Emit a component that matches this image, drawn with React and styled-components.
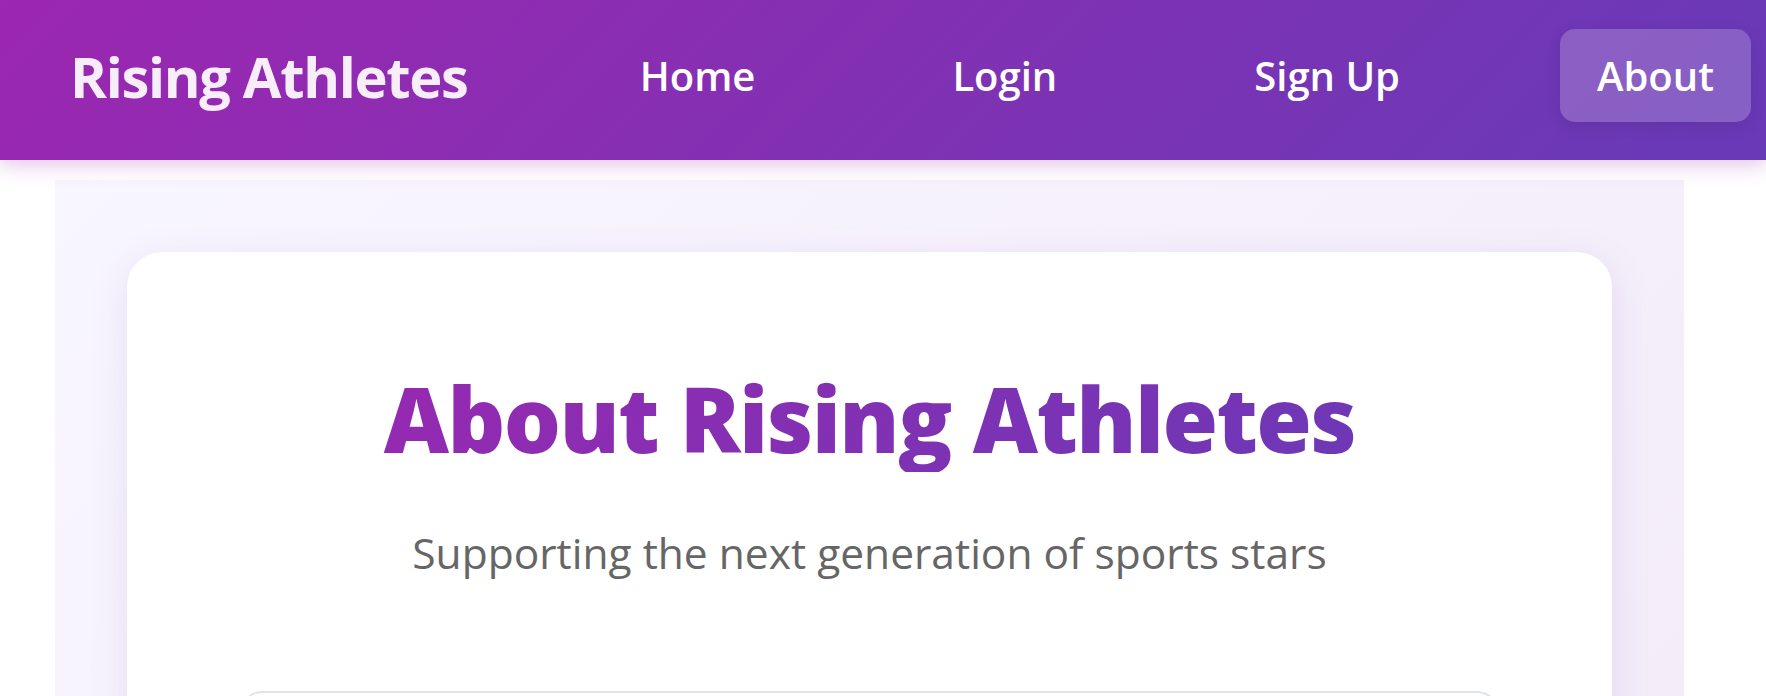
import React from 'react';
import styled, { createGlobalStyle } from 'styled-components';

const GlobalStyle = createGlobalStyle`
    * {
        box-sizing: border-box;
    }
    body {
        margin: 0;
        background: #ffffff;
        font-family: "Open Sans", "Noto Sans", sans-serif;
        overflow-x: hidden;
    }
`;

const Header = styled.header`
    display: flex;
    align-items: center;
    height: 160px;
    padding: 0 15px 9px 70px;
    background: linear-gradient(135deg, #9c27b0 0%, #673ab7 100%);
    box-shadow: 0 4px 20px rgba(156, 39, 176, 0.3);
    position: relative;
    z-index: 2;
`;

const Logo = styled.div`
    font-size: 56px;
    font-weight: 700;
    letter-spacing: -1.3px;
    color: #f8eef9;
    white-space: nowrap;
`;

const Nav = styled.nav`
    display: flex;
    align-items: center;
    gap: 123px;
    margin-left: auto;
`;

const NavLink = styled.a`
    display: flex;
    align-items: center;
    height: 93px;
    padding: 0 37px;
    border-radius: 15px;
    font-size: 40px;
    font-weight: 600;
    color: #ffffff;
    text-decoration: none;
    white-space: nowrap;
    background: ${p => (p.$active ? 'rgba(255, 255, 255, 0.2)' : 'transparent')};
    box-shadow: ${p => (p.$active ? '0 4px 15px rgba(0, 0, 0, 0.1)' : 'none')};
`;

const Page = styled.main`
    width: 1629px;
    margin: 20px 0 0 55px;
    padding: 72px 72px 60px;
    background: linear-gradient(135deg, #f8f6ff 0%, #f3ebf8 100%);
`;

const Card = styled.section`
    background: #ffffff;
    border-radius: 35px;
    padding: 112px 113px 60px;
    box-shadow: 0 10px 40px rgba(103, 58, 183, 0.12);
    text-align: center;
`;

const Title = styled.h1`
    margin: 0;
    font-size: 90px;
    font-weight: 800;
    letter-spacing: -1.6px;
    line-height: 1.2;
    background: linear-gradient(135deg, #9c27b0 0%, #673ab7 100%);
    -webkit-background-clip: text;
    background-clip: text;
    color: transparent;
`;

const Subtitle = styled.p`
    margin: 55px 0 0;
    font-size: 42.5px;
    font-weight: 400;
    color: #666666;
    line-height: 1.2;
`;

// section box whose top border peeks in at the bottom of the frame
const Section = styled.div`
    margin-top: 113px;
    min-height: 240px;
    border: 2px solid #e1e4ee;
    border-radius: 22px;
    background: #ffffff;
`;

export default function App() {
    return (
        <>
            <GlobalStyle />
            <Header>
                <Logo>Rising Athletes</Logo>
                <Nav>
                    <NavLink href="#">Home</NavLink>
                    <NavLink href="#">Login</NavLink>
                    <NavLink href="#">Sign Up</NavLink>
                    <NavLink href="#" $active>About</NavLink>
                </Nav>
            </Header>
            <Page>
                <Card>
                    <Title>About Rising Athletes</Title>
                    <Subtitle>Supporting the next generation of sports stars</Subtitle>
                    <Section />
                </Card>
            </Page>
        </>
    );
}
